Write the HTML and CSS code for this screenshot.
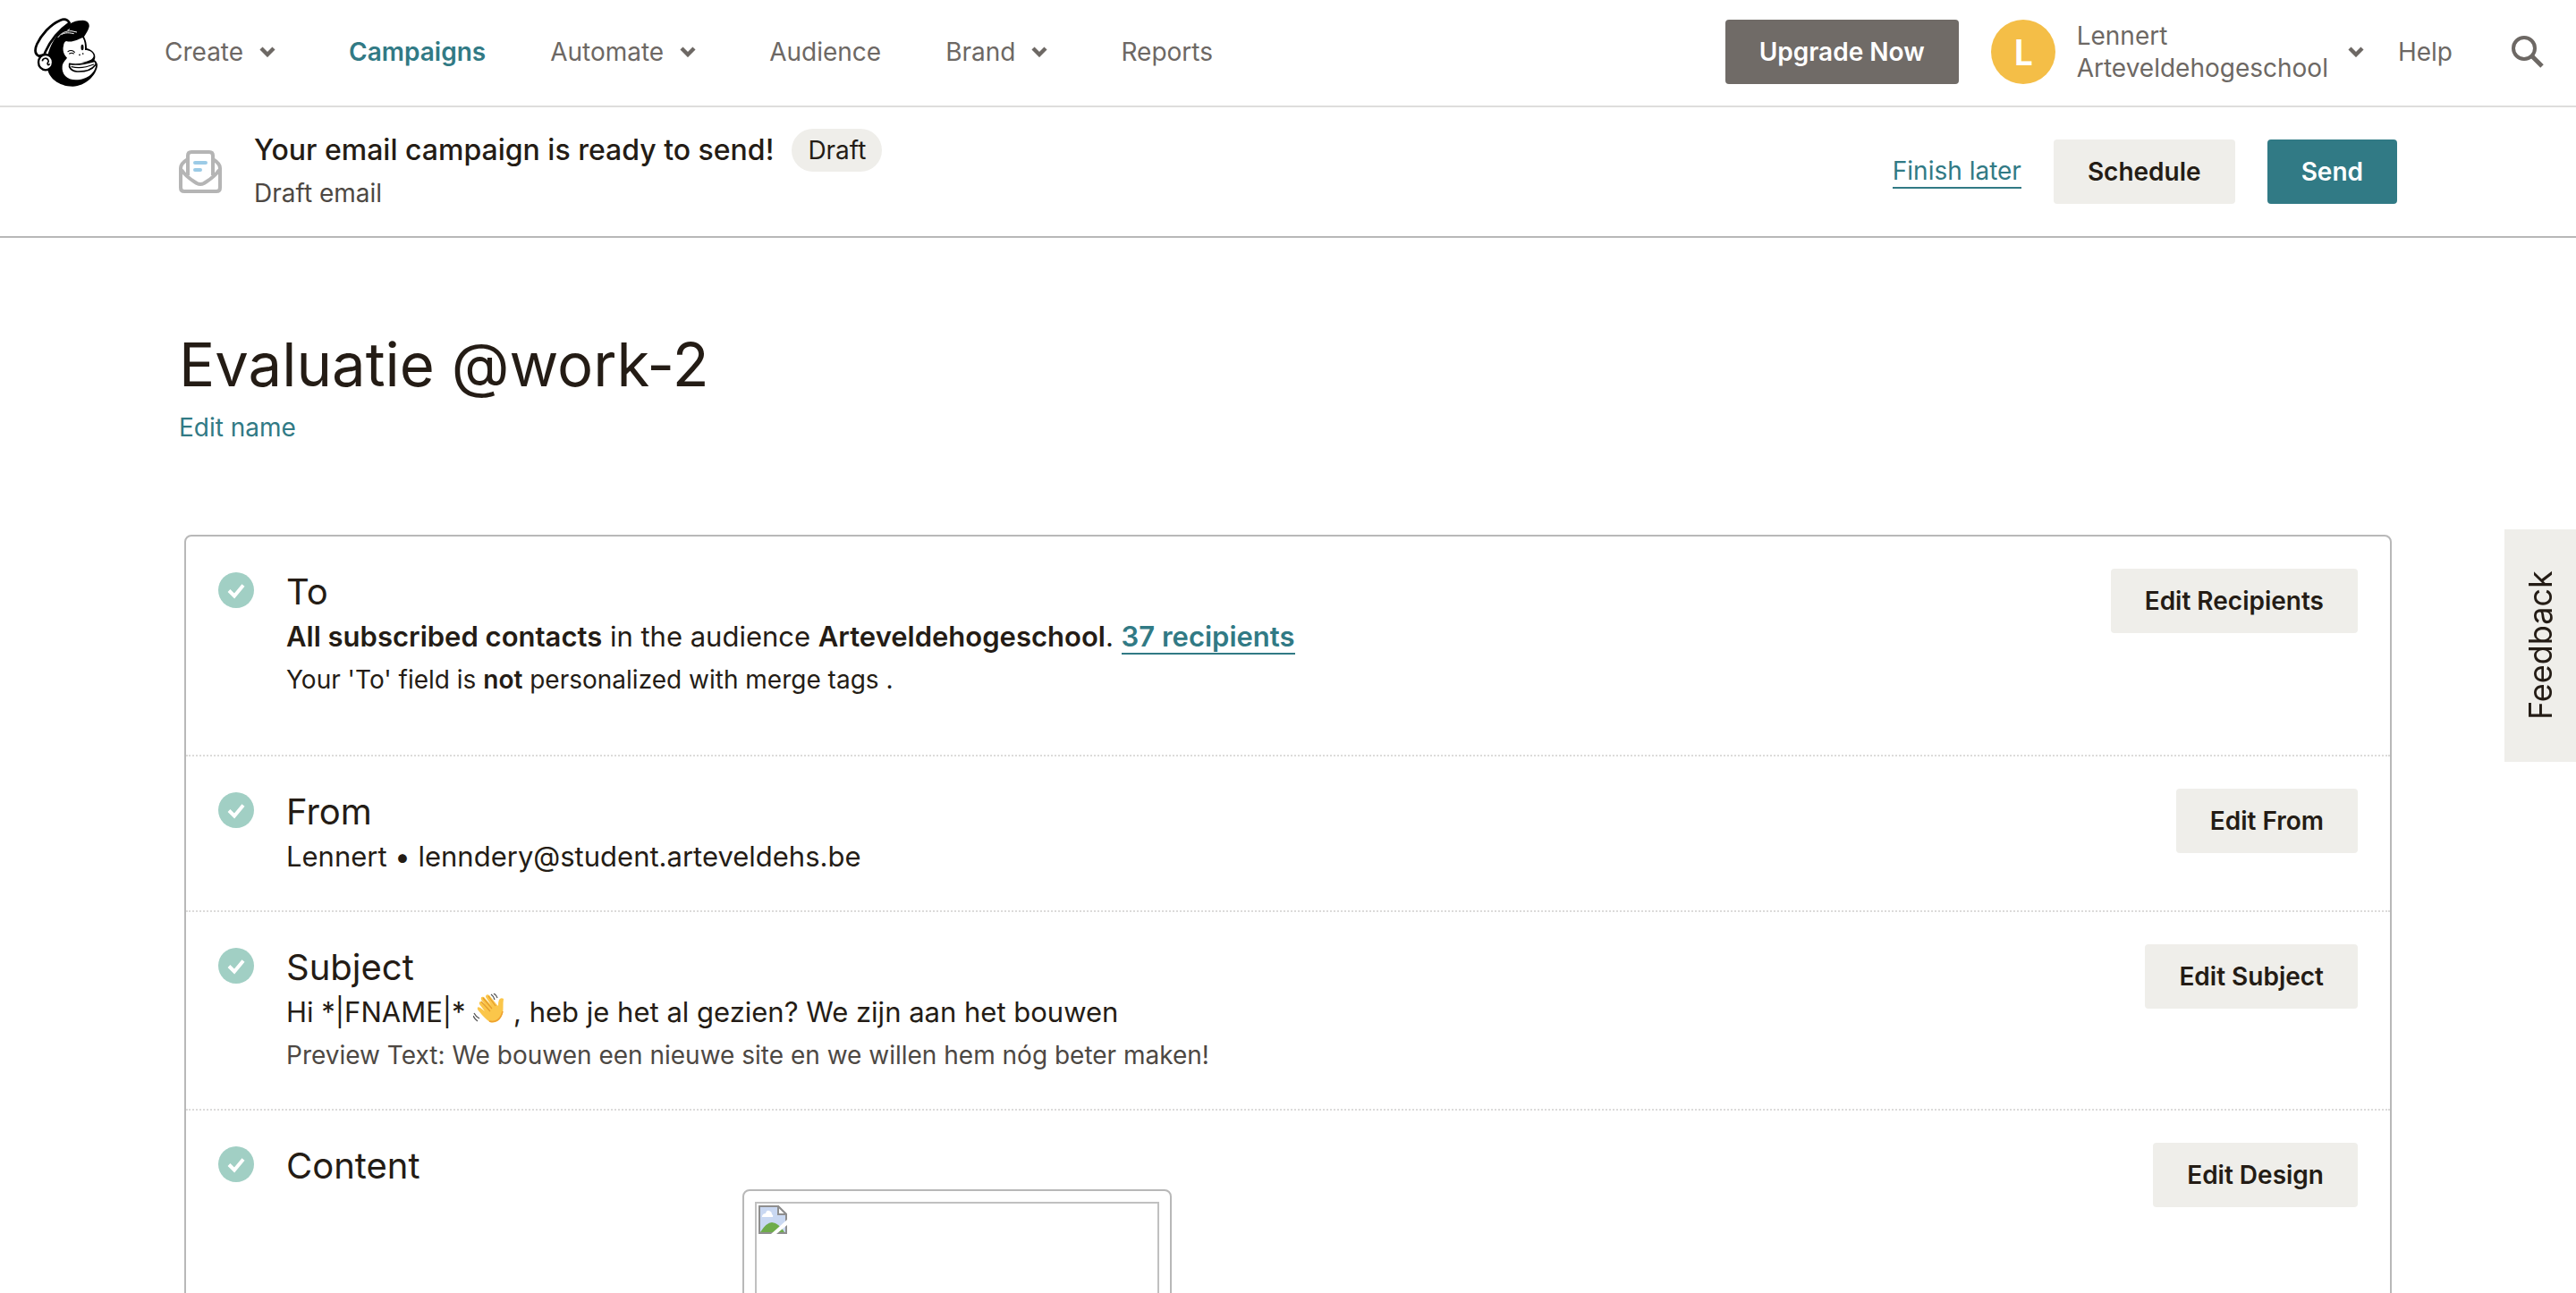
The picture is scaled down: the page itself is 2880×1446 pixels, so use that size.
FILE: index.html
```html
<!DOCTYPE html>
<html lang="en">
<head>
<meta charset="utf-8">
<title>Evaluatie @work-2</title>
<link rel="stylesheet" href="styles.css">
</head>
<body>
<svg class="defs" aria-hidden="true">
  <symbol id="chevron" viewBox="0 0 18 12"><path d="M2 2l7 7 7-7" fill="none" stroke="currentColor" stroke-width="4.4" stroke-linecap="butt" stroke-linejoin="miter"/></symbol>
  <symbol id="check" viewBox="0 0 40 40"><circle cx="20" cy="20" r="20" fill="#a1cfc4"/><path d="M12 20.500l6 6 10-12" fill="none" stroke="#fff" stroke-width="4"/></symbol>
</svg>
<header class="topbar">
  <a class="logo" href="#" aria-label="Home">
    <svg viewBox="54 58 216 231">
      <path d="M98 222C96 190 102 160 130 118C158 84 182 66 218 66C234 66 241 78 239 88C236 102 226 114 222 121C228 132 231 146 231 160C250 166 259 176 259 188C259 194 258 198 256 200C262 206 268 210 267 218C264 250 226 288 184 288C134 288 104 256 100 232Z"/>
      <path d="M70 186C55 178 56 164 64 146C78 116 108 80 142 66C156 60 166 62 173 75C140 98 110 132 92 172L88 182Z" fill="#fff" stroke="#000" stroke-width="8" stroke-linejoin="round"/>
      <path d="M162 136C184 142 200 130 217 124C224 134 226 150 225 166C240 166 254 174 254 186C253 198 232 206 214 205C234 210 250 205 262 208C264 240 234 266 194 266C164 266 146 246 149 220C150 208 158 202 165 192C154 182 149 166 153 152C154 144 156 138 162 136Z" fill="#fff"/>
      <path d="M173 212C192 216 226 212 257 203C262 206 263 213 259 217C248 232 224 239 198 238C178 236 170 224 173 212Z" fill="#fff" stroke="#000" stroke-width="5" stroke-linejoin="round"/>
      <path d="M180 222C206 228 230 224 254 214M168 171C174 166 184 166 190 173M173 178C178 175 183 175 187 178" fill="none" stroke="#000" stroke-width="3.500" stroke-linecap="round"/>
      <ellipse cx="216" cy="157" rx="4.500" ry="10"/><circle cx="207" cy="182" r="2.600"/><circle cx="218" cy="178" r="2.600"/>
      <path d="M134 124C146 108 160 102 180 102L198 106M146 114C158 106 174 108 188 111M166 100L174 96" fill="none" stroke="#fff" stroke-width="3"/>
      <ellipse cx="93" cy="207" rx="24" ry="26" fill="#fff" stroke="#000" stroke-width="7"/>
      <path d="M82 203C83 192 98 190 102 200C106 207 96 208 100 214C103 218 106 214 106 212" fill="none" stroke="#000" stroke-width="5"/>
    </svg>
  </a>
  <nav class="nav">
    <a href="#">Create <svg class="chev"><use href="#chevron"/></svg></a>
    <a href="#" class="active">Campaigns</a>
    <a href="#">Automate <svg class="chev"><use href="#chevron"/></svg></a>
    <a href="#">Audience</a>
    <a href="#">Brand <svg class="chev"><use href="#chevron"/></svg></a>
    <a href="#">Reports</a>
  </nav>
  <button class="btn btn-dark" type="button">Upgrade Now</button>
  <button class="account" type="button">
    <span class="avatar">L</span>
    <span class="who"><span>Lennert</span><span>Arteveldehogeschool</span></span>
    <svg class="chev"><use href="#chevron"/></svg>
  </button>
  <a class="help" href="#">Help</a>
  <button class="search" type="button" aria-label="Search">
    <svg viewBox="0 0 36 36" fill="none" stroke="#6d6864"><circle cx="14" cy="14" r="12" stroke-width="4"/><path d="M22.500 22.500L34 34" stroke-width="5"/></svg>
  </button>
</header>

<section class="statusbar">
  <svg class="mail" viewBox="0 0 48 48" fill="none" stroke="#b5b5b5" stroke-width="4" stroke-linejoin="round">
    <path d="M10 10C5 13 2 16 2 20V42Q2 46 6 46H42Q46 46 46 42V20C46 16 43 13 38 10"/>
    <path d="M10 28V6Q10 2 14 2H34Q38 2 38 6V28"/>
    <path d="M3 22C8 30 14 33 20 37Q24 39 28 37C34 33 40 30 45 22"/>
    <path d="M18 14H30M18 22H24" stroke="#9ccbe6" stroke-linecap="round"/>
  </svg>
  <div class="status">
    <div class="status-line"><strong>Your email campaign is ready to send!</strong><span class="badge">Draft</span></div>
    <div class="status-sub">Draft email</div>
  </div>
  <a class="later" href="#">Finish later</a>
  <button class="btn" type="button">Schedule</button>
  <button class="btn btn-teal" type="button">Send</button>
</section>

<main class="main">
  <h1>Evaluatie @work-2</h1>
  <a class="edit-name" href="#">Edit name</a>

  <div class="card">
    <section class="row row-to">
      <svg class="check"><use href="#check"/></svg>
      <div class="info">
        <h2>To</h2>
        <p class="lead"><strong>All subscribed contacts</strong> in the audience <strong>Arteveldehogeschool</strong>. <a href="#">37 recipients</a></p>
        <p class="note">Your 'To' field is <strong>not</strong> personalized with merge tags .</p>
      </div>
      <button class="btn" type="button">Edit Recipients</button>
    </section>
    <section class="row">
      <svg class="check"><use href="#check"/></svg>
      <div class="info">
        <h2>From</h2>
        <p class="lead">Lennert • lenndery@student.arteveldehs.be</p>
      </div>
      <button class="btn" type="button">Edit From</button>
    </section>
    <section class="row">
      <svg class="check"><use href="#check"/></svg>
      <div class="info">
        <h2>Subject</h2>
        <p class="lead">Hi *|FNAME|* <svg class="wave" viewBox="0 0 36 36" role="img" aria-label="waving hand">
          <path d="M7 12Q6 9 9 9L16 17L9 7Q8 3 12 4L20 13L14 4Q14 0 18 2L26 12L28 14Q28 9 29 7Q31 4 34 6C33 12 34 17 33 22C31 30 25 34 19 32C15 30 8 22 5 18Q4 14 8 16L13 20Z" fill="#fbc64a"/>
          <path d="M9 9L19 20M11 5L21 17M17 3L25 14" stroke="#e39b2d" stroke-width="1.200" fill="none"/>
          <path d="M33 20C31 29 25 33 18 31" stroke="#eea02f" stroke-width="1.500" fill="none"/>
          <path d="M20 1Q23 3 24 7M23 0Q26 2 27 5M1 22Q3 26 7 28M0 25Q2 29 5 31" stroke="#555" stroke-width="1.300" fill="none"/>
        </svg> , heb je het al gezien? We zijn aan het bouwen</p>
        <p class="note muted">Preview Text: We bouwen een nieuwe site en we willen hem nóg beter maken!</p>
      </div>
      <button class="btn" type="button">Edit Subject</button>
    </section>
    <section class="row">
      <svg class="check"><use href="#check"/></svg>
      <div class="info">
        <h2>Content</h2>
        <div class="frame"><div class="preview">
          <svg viewBox="0 0 32 32"><path d="M1 1H22L31 10V31H1Z" fill="#c9d8f2" stroke="#8e8e8e" stroke-width="2"/><path d="M22 1V10H31Z" fill="#fff" stroke="#8e8e8e" stroke-width="2"/><path d="M4 12Q5 9 8 9Q9 5 12 6Q15 7 15 10Q17 11 16 13H4Z" fill="#fff"/><path d="M2 30Q9 19 15 19Q23 20 29 30Z" fill="#6eac4b"/><path d="M14 32L32 16V22L20 32Z" fill="#fff"/></svg>
        </div></div>
      </div>
      <button class="btn" type="button">Edit Design</button>
    </section>
  </div>
</main>
<button class="feedback" type="button">Feedback</button>
</body>
</html>
```
FILE: styles.css
```css
* { box-sizing: border-box; }
body {
  margin: 0;
  height: 100vh;
  overflow: hidden;
  background: #fff;
  color: #241c15;
  font: 400 28px/36px Inter, "Liberation Sans", sans-serif;
}
h1, h2, p { margin: 0; font-weight: 400; }
strong { font-weight: 600; }
a { color: #317a85; text-decoration: none; }
svg { display: block; flex: none; }
button { font: inherit; color: inherit; border: 0; background: none; padding: 0; cursor: pointer; }
.defs { position: absolute; width: 0; height: 0; }

.btn {
  flex: none;
  height: 72px;
  padding: 0 38px;
  border-radius: 4px;
  background: #efeeea;
  font-weight: 600;
}
.btn-dark { background: #706b67; color: #fff; }
.btn-teal { background: #317a85; color: #fff; }

.topbar {
  display: flex;
  align-items: center;
  height: 120px;
  padding: 0 36px 2px 38px;
  border-bottom: 2px solid #dedddc;
  color: #6d6864;
}
.logo svg { width: 72px; height: 77px; }
.nav { display: flex; gap: 72px; margin: 0 auto 0 74px; }
.nav a { display: flex; align-items: center; gap: 18px; color: #6d6864; }
.nav .active { color: #317a85; font-weight: 600; }
.chev { width: 18px; height: 12px; }
.nav .chev { margin-right: 10px; }
.account { display: flex; align-items: center; margin: 0 38px 0 36px; text-align: left; }
.avatar {
  width: 72px;
  height: 72px;
  margin-right: 24px;
  border-radius: 50%;
  background: #f4be47;
  color: #fff;
  font: 700 40px/72px Lato, sans-serif;
  text-align: center;
}
.who { display: grid; margin-right: 22px; }
.help { color: #6d6864; margin-right: 66px; }
.search svg { width: 36px; height: 36px; }

.statusbar {
  display: flex;
  align-items: center;
  height: 146px;
  padding: 0 200px;
  border-bottom: 2px solid #b8b8b8;
}
.mail { width: 48px; height: 48px; margin-right: 36px; }
.status { margin-right: auto; }
.status-line { display: flex; align-items: center; gap: 20px; font-size: 32px; }
.status-line strong { font-weight: 500; }
.badge { height: 48px; padding: 0 18px; border-radius: 24px; background: #efeeea; font-size: 28px; line-height: 48px; }
.status-sub { line-height: 48px; color: #4d4843; }
.later { margin-right: 36px; line-height: 36px; border-bottom: 2px solid; }
.statusbar .btn + .btn { margin-left: 36px; }

.main { padding: 96px 200px 0; }
h1 { font-size: 67px; line-height: 92px; }
.edit-name { display: block; width: max-content; line-height: 48px; }
.card {
  margin: 96px 6px 0;
  border: 2px solid #b8b8b8;
  border-radius: 8px;
}
.row { display: flex; align-items: flex-start; padding: 36px; }
.row + .row { border-top: 2px dotted #dcdbda; }
.row-to { padding-bottom: 60px; }
.check { width: 40px; height: 40px; margin: 4px 36px 0 0; }
.info { flex: 1; }
h2 { font-size: 40px; line-height: 52px; }
.lead { font-size: 31px; line-height: 48px; }
.lead a { font-weight: 600; border-bottom: 2px solid; }
.note { line-height: 48px; }
.muted { color: #4d4843; }
.wave { display: inline-block; width: 36px; height: 36px; vertical-align: -4px; }
.frame {
  width: 480px;
  height: 640px;
  margin-left: 510px;
  padding: 12px;
  border: 2px solid #b8b8b8;
  border-radius: 8px;
}
.preview { height: 100%; padding: 2px; border: 2px solid #c0c0c0; }
.preview svg { width: 32px; height: 32px; }

.feedback {
  position: fixed;
  top: 592px;
  right: 0;
  width: 80px;
  height: 260px;
  background: #efeeea;
  font-size: 36px;
  writing-mode: vertical-rl;
  transform: rotate(180deg);
}
```
